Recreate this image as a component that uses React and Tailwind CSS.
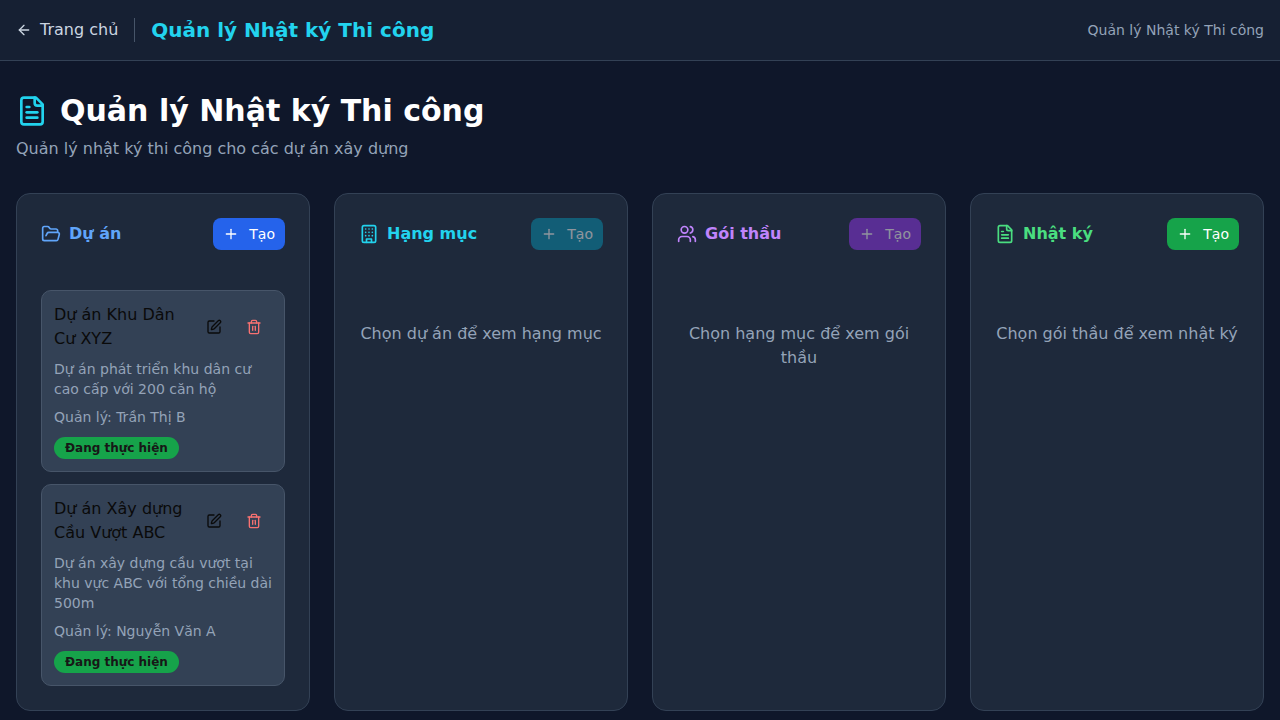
import { ArrowLeft, FolderOpen, Plus, SquarePen, Users } from 'lucide-react';

const projects = [
  {
    name: 'Dự án Khu Dân Cư XYZ',
    description: 'Dự án phát triển khu dân cư cao cấp với 200 căn hộ',
    manager: 'Trần Thị B',
    status: 'Đang thực hiện',
  },
  {
    name: 'Dự án Xây dựng Cầu Vượt ABC',
    description: 'Dự án xây dựng cầu vượt tại khu vực ABC với tổng chiều dài 500m',
    manager: 'Nguyễn Văn A',
    status: 'Đang thực hiện',
  },
];

function Glyph({ className, children }) {
  return (
    <svg
      viewBox="0 0 24 24"
      fill="none"
      stroke="currentColor"
      strokeWidth="2"
      strokeLinecap="round"
      strokeLinejoin="round"
      className={className}
      aria-hidden="true"
    >
      {children}
    </svg>
  );
}

function FileIcon({ className }) {
  return (
    <Glyph className={className}>
      <path d="M15 2H6a2 2 0 0 0-2 2v16a2 2 0 0 0 2 2h12a2 2 0 0 0 2-2V7Z" />
      <path d="M14 2v4a2 2 0 0 0 2 2h4" />
      <path d="M10 9H8" />
      <path d="M16 13H8" />
      <path d="M16 17H8" />
    </Glyph>
  );
}

function BuildingIcon({ className }) {
  return (
    <Glyph className={className}>
      <rect width="16" height="20" x="4" y="2" rx="2" ry="2" />
      <path d="M9 22v-4h6v4" />
      <path d="M8 6h.01" />
      <path d="M16 6h.01" />
      <path d="M12 6h.01" />
      <path d="M12 10h.01" />
      <path d="M12 14h.01" />
      <path d="M16 10h.01" />
      <path d="M16 14h.01" />
      <path d="M8 10h.01" />
      <path d="M8 14h.01" />
    </Glyph>
  );
}

function TrashIcon({ className }) {
  return (
    <Glyph className={className}>
      <path d="M3 6h18" />
      <path d="M19 6v14c0 1-1 2-2 2H7c-1 0-2-1-2-2V6" />
      <path d="M8 6V4c0-1 1-2 2-2h4c1 0 2 1 2 2v2" />
      <path d="M10 11v6" />
      <path d="M14 11v6" />
    </Glyph>
  );
}

function Column({ icon: Icon, title, titleClass, buttonClass, disabled, children }) {
  return (
    <section className="flex flex-col gap-10 rounded-[14px] border border-[#334155] bg-[#1e293b] p-6">
      <div className="flex items-center justify-between">
        <h2 className={`flex items-center gap-2 text-base leading-5 font-semibold ${titleClass}`}>
          <Icon className="size-5" aria-hidden="true" />
          {title}
        </h2>
        <button
          type="button"
          disabled={disabled}
          className={`flex h-8 items-center gap-2.5 rounded-lg px-2.5 text-sm text-white disabled:opacity-50 ${buttonClass}`}
        >
          <Plus className="size-4" aria-hidden="true" />
          Tạo
        </button>
      </div>
      {children}
    </section>
  );
}

function EmptyState({ children }) {
  return <p className="py-8 text-center text-[#94a3b8]">{children}</p>;
}

function ProjectCard({ project }) {
  return (
    <article className="rounded-[10px] border border-[#475569] bg-[#334155] p-3">
      <div className="flex items-center justify-between">
        <h3 className="flex-1 text-base text-[#0a0a0a]">{project.name}</h3>
        <div className="flex gap-1">
          <button type="button" aria-label="Sửa" className="flex h-8 w-9 items-center justify-center text-[#0a0a0a]">
            <SquarePen className="size-4" />
          </button>
          <button type="button" aria-label="Xóa" className="flex h-8 w-9 items-center justify-center text-[#f87171]">
            <TrashIcon className="size-4" />
          </button>
        </div>
      </div>
      <p className="mt-2 text-sm text-[#94a3b8]">{project.description}</p>
      <p className="mt-2 text-sm text-[#94a3b8]">Quản lý: {project.manager}</p>
      <div className="mt-2.5 flex">
        <span className="rounded-full border border-transparent bg-[#16a34a] bg-origin-border px-2.5 py-0.5 text-xs font-semibold text-[#171717]">
          {project.status}
        </span>
      </div>
    </article>
  );
}

export default function App() {
  return (
    <div className="min-h-screen bg-[#0f172a] font-['DejaVu_Sans',sans-serif]">
      <header className="flex items-center justify-between border-b border-[#334155] bg-[#1e293b]/50 px-4 py-4">
        <div className="flex items-center gap-4">
          <a href="#" className="flex items-center gap-2 text-base text-[#cbd5e1]">
            <ArrowLeft className="size-4" aria-hidden="true" />
            Trang chủ
          </a>
          <div className="h-6 w-px bg-[#475569]" />
          <span className="text-xl font-bold text-[#22d3ee]">Quản lý Nhật ký Thi công</span>
        </div>
        <span className="text-sm text-[#94a3b8]">Quản lý Nhật ký Thi công</span>
      </header>

      <main className="px-4 py-8">
        <h1 className="mb-2 flex items-center gap-3 text-3xl font-bold text-white">
          <FileIcon className="size-8 text-[#22d3ee]" />
          Quản lý Nhật ký Thi công
        </h1>
        <p className="mb-8 text-[#94a3b8]">Quản lý nhật ký thi công cho các dự án xây dựng</p>

        <div className="grid grid-cols-1 gap-6 md:grid-cols-2 lg:grid-cols-4">
          <Column icon={FolderOpen} title="Dự án" titleClass="text-[#60a5fa]" buttonClass="bg-[#2563eb]">
            <div className="flex flex-col gap-3">
              {projects.map((project) => (
                <ProjectCard key={project.name} project={project} />
              ))}
            </div>
          </Column>
          <Column icon={BuildingIcon} title="Hạng mục" titleClass="text-[#22d3ee]" buttonClass="bg-[#0891b2]" disabled>
            <EmptyState>Chọn dự án để xem hạng mục</EmptyState>
          </Column>
          <Column icon={Users} title="Gói thầu" titleClass="text-[#c084fc]" buttonClass="bg-[#9333ea]" disabled>
            <EmptyState>Chọn hạng mục để xem gói thầu</EmptyState>
          </Column>
          <Column icon={FileIcon} title="Nhật ký" titleClass="text-[#4ade80]" buttonClass="bg-[#16a34a]">
            <EmptyState>Chọn gói thầu để xem nhật ký</EmptyState>
          </Column>
        </div>
      </main>
    </div>
  );
}
